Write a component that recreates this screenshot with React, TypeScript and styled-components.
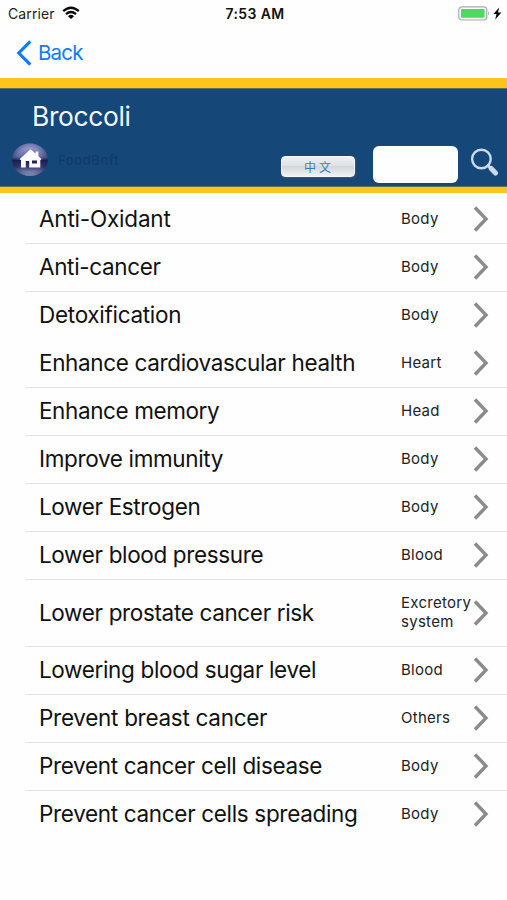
import React from "react";
import styled, { createGlobalStyle } from "styled-components";

const GlobalStyle = createGlobalStyle`
  * { box-sizing: border-box; }
  body { margin: 0; background: #fefefe; font-family: Inter, "Liberation Sans", sans-serif; color: #111; }
`;

const Screen = styled.div`
  width: 507px;
  height: 900px;
  overflow: hidden;
  display: flex;
  flex-direction: column;
  background: #fefefe;
`;

const StatusBar = styled.div`
  height: 27px;
  flex: none;
  display: grid;
  grid-template-columns: 1fr auto 1fr;
  align-items: center;
  padding: 0 5px 1px 8px;
`;

const Carrier = styled.div`
  display: flex;
  align-items: center;
  gap: 7px;
  font-size: 14px;
  letter-spacing: 0.1px;
  color: #222;
`;

const Clock = styled.div`
  font-size: 14px;
  font-weight: 600;
  letter-spacing: 0.4px;
`;

const Power = styled.div`
  display: flex;
  justify-content: flex-end;
  align-items: center;
  gap: 3px;
`;

const NavBar = styled.div`
  height: 51px;
  flex: none;
  display: flex;
  align-items: center;
  gap: 6px;
  padding-left: 16px;
  color: #0f7bfb;
  font-size: 20.5px;
  letter-spacing: -0.8px;
`;

const Header = styled.header`
  height: 115px;
  flex: none;
  background: #154779;
  border-top: 10px solid #fec41c;
  border-bottom: 6px solid #fec41c;
  box-shadow: inset 0 1px #5f7152, inset 0 -1px #5f7152;
`;

const Title = styled.h1`
  margin: 0;
  padding: 12px 0 0 32px;
  font-size: 26.4px;
  line-height: 32px;
  font-weight: 400;
  letter-spacing: -0.35px;
  color: #f2f8ff;
`;

const Tools = styled.div`
  height: 40px;
  margin-top: 11px;
  display: flex;
  align-items: flex-start;
  padding-left: 12px;

  > * { flex: none; }
`;

const Brand = styled.span`
  width: 233px;
  padding: 9px 0 0 10px;
  font-size: 13px;
  line-height: 16px;
  font-weight: 500;
  letter-spacing: 0.6px;
  color: #113b69;
`;

const LanguageButton = styled.button`
  width: 74px;
  height: 21px;
  margin: 13px 18px 0 0;
  padding: 0;
  border: 1px solid #f5f6f8;
  border-radius: 4px;
  background: linear-gradient(#eef0f2, #dfe2e5 45%, #d3d7dc 50%, #f0f1f3);
  box-shadow: 1px 1px 2px #4a5460;
  color: #397db7;
  font: 12px/17px "Noto Sans CJK SC", sans-serif;
  letter-spacing: 3px;
  text-indent: 2px;
`;

const SearchField = styled.input`
  width: 85px;
  height: 37px;
  margin: 3px 12px 0 0;
  border: 0;
  border-radius: 6px;
  background: #fefefe;
`;

const SearchIcon = styled.svg`
  margin-top: 5px;
`;

const List = styled.ul`
  list-style: none;
  margin: 0;
  padding: 2px 0 0 25px;
`;

const Row = styled.li<{ $tall: boolean; $divider: boolean }>`
  height: ${(p) => (p.$tall ? 67 : 48)}px;
  display: grid;
  grid-template-columns: 362px 72px 1fr;
  align-items: center;
  padding-left: 14px;
  box-shadow: 0 1px ${(p) => (p.$divider ? "#e3e3e5" : "transparent")};
`;

const Name = styled.span<{ $spacing: number }>`
  font-size: 22.5px;
  line-height: 28px;
  white-space: nowrap;
  letter-spacing: ${(p) => p.$spacing}px;
`;

const Area = styled.span`
  padding-bottom: 1px;
  font-size: 15px;
  line-height: 19px;
  color: #222;
  letter-spacing: 0.28px;
  white-space: pre-line;
`;

type Benefit = { name: string; area: string; divider?: boolean; spacing?: number };

const benefits: Benefit[] = [
  { name: "Anti-Oxidant", area: "Body", spacing: -0.2 },
  { name: "Anti-cancer", area: "Body" },
  { name: "Detoxification", area: "Body", divider: false, spacing: -0.29 },
  { name: "Enhance cardiovascular health", area: "Heart" },
  { name: "Enhance memory", area: "Head", spacing: -0.4 },
  { name: "Improve immunity", area: "Body" },
  { name: "Lower Estrogen", area: "Body" },
  { name: "Lower blood pressure", area: "Blood" },
  { name: "Lower prostate cancer risk", area: "Excretory\nsystem" },
  { name: "Lowering blood sugar level", area: "Blood" },
  { name: "Prevent breast cancer", area: "Others", spacing: -0.29 },
  { name: "Prevent cancer cell disease", area: "Body" },
  { name: "Prevent cancer cells spreading", area: "Body", divider: false, spacing: -0.33 },
];

const Wifi = () => (
  <svg width="18" height="14" viewBox="0 0 18 14" fill="none" stroke="#080808" strokeWidth="2.3">
    <path d="M1.2 5.2Q9 -1.8 16.8 5.2M4 8.2Q9 3.9 14 8.2" />
    <path d="M6 10.2Q9 7.5 12 10.2L9 13Z" fill="#080808" stroke="none" />
  </svg>
);

const Battery = () => (
  <svg width="32" height="15" viewBox="0 0 32 15">
    <rect x=".8" y=".8" width="28" height="13.2" rx="3" fill="#fefefe" stroke="#aaa" strokeWidth="1.2" />
    <rect x="3" y="3" width="23.6" height="8.8" rx="1" fill="#4cd964" />
    <path d="M30 5.2Q32 7.4 30 9.6Z" fill="#aaa" />
  </svg>
);

const Bolt = () => (
  <svg width="9" height="13" viewBox="0 0 9 13">
    <path d="M6.2 .5L.4 7.1H3.5L2.2 12.5L8.4 5.4H5Z" fill="#090909" />
  </svg>
);

const Home = () => (
  <svg width="36" height="34" viewBox="0 0 36 34">
    <defs>
      <linearGradient id="orb" x2="0" y2="1">
        <stop offset="0" stopColor="#a9b0e6" />
        <stop offset=".42" stopColor="#5d659c" />
        <stop offset=".52" stopColor="#1b1d52" />
        <stop offset=".72" stopColor="#333c70" />
        <stop offset="1" stopColor="#b5bddf" />
      </linearGradient>
      <radialGradient id="rim">
        <stop offset=".7" stopColor="#171b4c" stopOpacity="0" />
        <stop offset="1" stopColor="#171b4c" stopOpacity=".4" />
      </radialGradient>
    </defs>
    <ellipse cx="18" cy="16.8" rx="17.8" ry="16.3" fill="url(#orb)" />
    <ellipse cx="18" cy="16.8" rx="17.8" ry="16.3" fill="url(#rim)" />
    <path fillRule="evenodd" fill="#fafaff" d="M18.5 6.2L7.5 16.2L9 17V24.5H13.8V18H17.2V24.5H28.3V17L29.6 16.2L26.4 13V8.5H23.6V10.5ZM20 17.6H25V20.6H20Z" />
  </svg>
);

const Chevron = () => (
  <svg width="17" height="26" viewBox="0 0 17 26" fill="none" stroke="#8b8b8b" strokeWidth="3.4">
    <path d="M2 1.5L13 13L2 24.5" />
  </svg>
);

export default function App() {
  return (
    <>
      <GlobalStyle />
      <Screen>
        <StatusBar>
          <Carrier>Carrier <Wifi /></Carrier>
          <Clock>7:53 AM</Clock>
          <Power><Battery /><Bolt /></Power>
        </StatusBar>
        <NavBar>
          <svg width="16" height="26" viewBox="0 0 16 26" fill="none" stroke="currentColor" strokeWidth="3.2">
            <path d="M14.3 1.3L2.8 13L14.3 24.7" />
          </svg>
          Back
        </NavBar>
        <Header>
          <Title>Broccoli</Title>
          <Tools>
            <Home />
            <Brand>FoodBnft</Brand>
            <LanguageButton>中文</LanguageButton>
            <SearchField aria-label="Search" />
            <SearchIcon width="29" height="29" viewBox="0 0 29 29" fill="none" stroke="#cbdbed" strokeLinecap="round">
              <circle cx="11.4" cy="11" r="9.3" strokeWidth="2.4" />
              <path d="M18 17.5L21 20.5" strokeWidth="3" />
              <path d="M21.2 20.5L25.5 25" strokeWidth="5" />
            </SearchIcon>
          </Tools>
        </Header>
        <List>
          {benefits.map(({ name, area, divider = true, spacing = -0.35 }) => (
            <Row key={name} $tall={area.includes("\n")} $divider={divider}>
              <Name $spacing={spacing}>{name}</Name>
              <Area>{area}</Area>
              <Chevron />
            </Row>
          ))}
        </List>
      </Screen>
    </>
  );
}
